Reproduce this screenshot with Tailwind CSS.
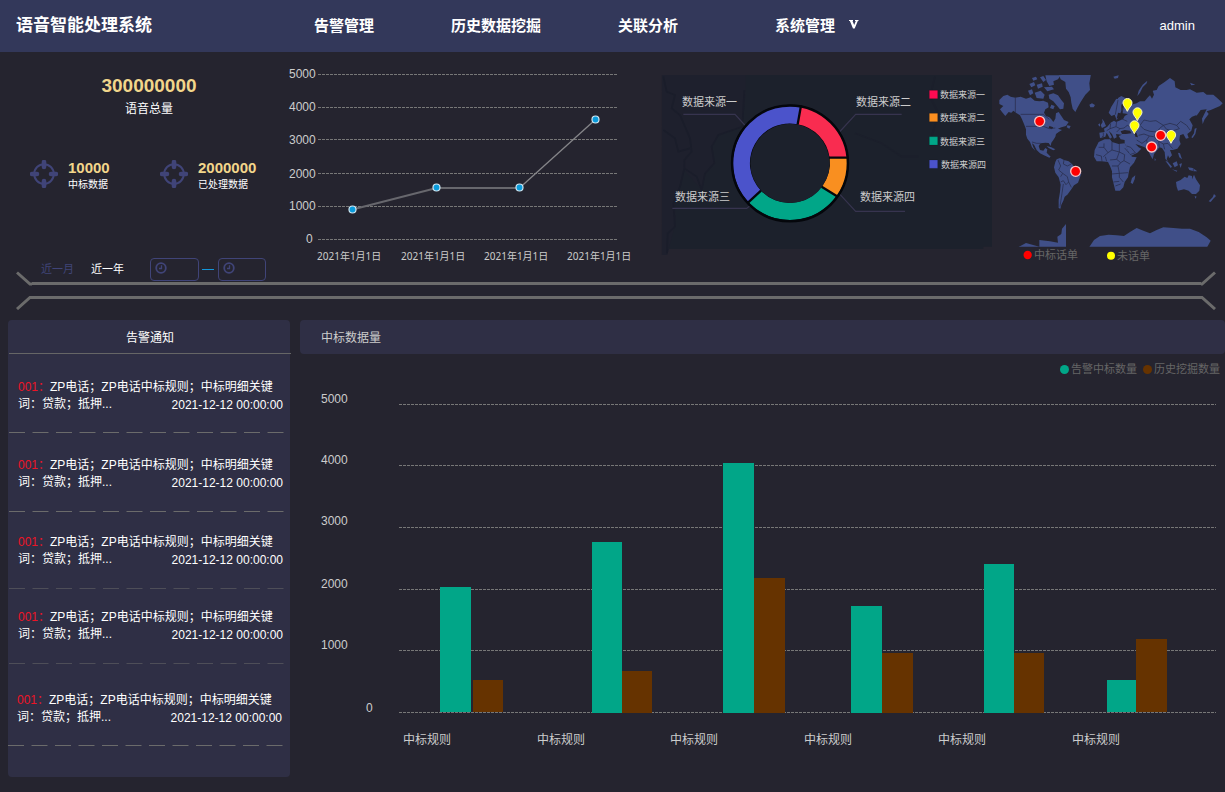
<!DOCTYPE html>
<html lang="zh-CN">
<head>
<meta charset="utf-8">
<meta name="viewport" content="width=device-width, initial-scale=1">
<title>语音智能处理系统</title>
<script src="https://cdn.jsdelivr.net/npm/@tailwindcss/browser@4"></script>
</head>
<body class="min-h-screen bg-[#25242f] font-['Liberation_Sans','Noto_Sans_CJK_SC',sans-serif] text-xs text-white">
<svg class="hidden" aria-hidden="true">
  <symbol id="target" viewBox="0 0 28 28">
    <circle cx="14" cy="14" r="9.800" fill="none" stroke="#404478" stroke-width="2"/>
    <path d="M14 2v5M14 21v5M2 14h5M21 14h5" stroke="#404478" stroke-width="4.600" stroke-linecap="round"/>
  </symbol>
  <symbol id="clock" viewBox="0 0 12 12">
    <circle cx="6" cy="6" r="4.800" fill="none" stroke="#404478" stroke-width="1.800"/>
    <path d="M6.500 3.300v3.200H4" fill="none" stroke="#404478" stroke-width="1.300"/>
  </symbol>
</svg>

<header class="flex h-13 items-center bg-[#33385a]">
  <h1 class="w-[298px] shrink-0 pb-px pl-4 text-[17px] leading-6 font-bold">语音智能处理系统</h1>
  <nav class="flex items-center gap-[77px] pl-4 text-[15px] leading-6 font-semibold whitespace-nowrap">
    <a href="#">告警管理</a>
    <a href="#">历史数据挖掘</a>
    <a href="#">关联分析</a>
    <button class="ml-5 flex gap-3.5 font-semibold"><span>系统管理</span>
      <svg class="mt-1.5 h-2.5 w-2.5" viewBox="0 0 10 10" aria-hidden="true"><path d="M0 0H4V1H3.500L5.200 5 6.800 1H6V0H9.500V1H8.800L5.700 8.500H4L.900 1H0Z" fill="#fff"/></svg>
    </button>
  </nav>
  <a href="#" class="ml-auto pr-[30px] text-[13px]">admin</a>
</header>

<main>
  <section class="grid grid-cols-[280fr_375fr_340fr_230fr]">
    <div class="flex min-w-0 flex-col pt-[22px]">
      <div class="pl-[18px] text-center">
        <p class="text-[19px] leading-6 font-bold text-[#f2d68b]">300000000</p>
        <p class="leading-[22px]">语音总量</p>
      </div>
      <div class="mt-9 grid grid-cols-[130px_1fr] pl-[30px]">
        <div class="flex items-center gap-2.5">
          <svg class="h-7 w-7 shrink-0"><use href="#target"/></svg>
          <div class="pt-0.5"><p class="text-[15px] leading-5 font-bold text-[#f2d68b]">10000</p><p class="text-[10px] leading-[14px]">中标数据</p></div>
        </div>
        <div class="flex items-center gap-2.5">
          <svg class="h-7 w-7 shrink-0"><use href="#target"/></svg>
          <div class="pt-0.5"><p class="text-[15px] leading-5 font-bold text-[#f2d68b]">2000000</p><p class="text-[10px] leading-[14px]">已处理数据</p></div>
        </div>
      </div>
      <form class="mt-[65px] flex h-6 items-center pl-[41px] text-[11px] whitespace-nowrap">
        <button type="button" class="w-[50px] shrink-0 text-left text-[#404478]">近一月</button>
        <button type="button" class="w-[59px] shrink-0 text-left">近一年</button>
        <label class="relative block">
          <svg class="absolute top-1 left-[5px] h-3 w-3"><use href="#clock"/></svg>
          <input type="text" aria-label="开始日期" class="block h-[23px] w-[49px] rounded border border-[#404478] bg-transparent pl-5 text-[10px] outline-none">
        </label>
        <span class="mx-[3px] h-px w-3 bg-[#1296db]"></span>
        <label class="relative ml-px block">
          <svg class="absolute top-1 left-[5px] h-3 w-3"><use href="#clock"/></svg>
          <input type="text" aria-label="结束日期" class="block h-[23px] w-[48px] rounded border border-[#404478] bg-transparent pl-5 text-[10px] outline-none">
        </label>
      </form>
    </div>

    <svg class="w-full" viewBox="280 52 375 220" role="img" aria-label="语音数据趋势">
      <g stroke="#777777" stroke-dasharray="3 1">
        <path d="M318 74.500H617M318 107.500H617M318 139.500H617M318 173.500H617M318 206.500H617M318 239.500H617"/>
      </g>
      <g fill="none" stroke="#67676d">
        <path d="M352.500 209.500 436.500 188H519.500" stroke-width="2"/>
        <path d="M519.500 188 595.500 119.500" stroke-width="1.300" stroke="#858589"/>
      </g>
      <g fill="#0a9bdc" stroke="#cfe8f4" stroke-width="1.200">
        <circle cx="352.500" cy="209.500" r="3.500"/><circle cx="436.500" cy="187.500" r="3.500"/>
        <circle cx="519.500" cy="187.500" r="3.500"/><circle cx="595.500" cy="119.500" r="3.500"/>
      </g>
      <g class="fill-[#cccccc] text-xs">
        <text x="289" y="78">5000</text><text x="289" y="111">4000</text><text x="289" y="144">3000</text>
        <text x="289" y="178">2000</text><text x="289" y="210">1000</text><text x="306" y="243">0</text>
      </g>
      <g class="fill-[#cccccc] font-['Noto_Sans','Noto_Sans_CJK_SC',sans-serif] text-[10px]">
        <text x="317" y="260">2021年1月1日</text><text x="401" y="260">2021年1月1日</text>
        <text x="484" y="260">2021年1月1日</text><text x="567" y="260">2021年1月1日</text>
      </g>
    </svg>

    <svg class="w-full" viewBox="655 52 340 220" role="img" aria-label="数据来源占比">
      <g transform="translate(655 60) scale(.33333)">
        <path d="M21 45H1011V560H985V567H42L36 585H21Z" fill="#1c212c"/>
        <path d="M21 45H272V95L262 200 230 210 190 225 170 260 178 310 150 340 140 390 88 330 60 420 62 490 36 585H21Z" fill="#1e202d"/>
        <path d="M25 50 35 95 60 105 50 145 75 165 90 200 105 235 110 275 88 300V325L125 350 140 390 150 340 178 310 170 260 190 225 262 200 268 90M25 210 60 235 70 275 105 265M88 325 75 380 55 430 60 500 38 520 36 580" fill="none" stroke="#1a1d2a" stroke-width="5"/>
        <path d="M840 50 825 110 850 160 830 230M600 220 680 250 740 290 790 290" fill="none" stroke="#1b1f2b" stroke-width="5"/>
        <path d="M85 163H240L280 207M740 163H602L545 225M52 445H275L300 425M750 454H602L550 398" fill="none" stroke="#37344f" stroke-width="3.500"/>
        <circle cx="405" cy="310" r="146" fill="none" stroke="#05070c" stroke-width="63"/>
        <path d="M437 139A173 173 0 0 1 577 293H524A119 119 0 0 0 428 193Z" fill="#f92c50"/>
        <path d="M577 293A173 173 0 0 1 545 408L500 380A119 119 0 0 0 524 293Z" fill="#f98f20"/>
        <path d="M545 408A173 173 0 0 1 280 427L318 392A119 119 0 0 0 500 380Z" fill="#01a688"/>
        <path d="M280 427A173 173 0 0 1 437 139L428 193A119 119 0 0 0 318 392Z" fill="#4b53cb"/>
        <circle cx="405" cy="310" r="119" fill="#1c212c"/>
        <circle cx="405" cy="310" r="173" fill="none" stroke="#05070c" stroke-width="6"/>
        <path d="M438 137 428 193M578 293H522M546 409 500 380M279 428 318 392" stroke="#05070c" stroke-width="7"/>
        <g stroke="#0003" stroke-width="2">
          <path d="M823 91h25v25h-25z" fill="#ff0b52"/><path d="M823 160h25v25h-25z" fill="#fb8f20"/>
          <path d="M823 230h25v25h-25z" fill="#01a688"/><path d="M823 300h25v25h-25z" fill="#4b53cb"/>
        </g>
      </g>
      <g class="fill-[#cccccc] text-[11px]">
        <text x="682" y="106">数据来源一</text><text x="856" y="106">数据来源二</text>
        <text x="675" y="201">数据来源三</text><text x="860" y="201">数据来源四</text>
      </g>
      <g class="fill-[#cccccc] text-[9px]">
        <text x="940" y="98">数据来源一</text><text x="940" y="121">数据来源二</text>
        <text x="940" y="145">数据来源三</text><text x="941" y="168">数据来源四</text>
      </g>
    </svg>

    <svg class="w-full" viewBox="995 52 230 220" role="img" aria-label="话单分布地图">
      <defs>
        <filter id="coast" x="-5%" y="-5%" width="110%" height="110%">
          <feTurbulence type="fractalNoise" baseFrequency=".22" numOctaves="2" seed="4"/>
          <feDisplacementMap in="SourceGraphic" scale="4" xChannelSelector="R" yChannelSelector="G"/>
        </filter>
        <clipPath id="mapArea"><path d="M0 45H702V560H0Z"/></clipPath>
      </defs>
      <g transform="translate(990 60) scale(.33333)">
        <g clip-path="url(#mapArea)"><g filter="url(#coast)">
          <g fill="#3f5088">
            <path d="M28 120 40 108 52 104 62 110 76 113 92 110 108 116 122 112 134 122 148 124 160 122 174 128 176 142 166 148 162 158 168 168 178 172 184 178 190 186 196 176 198 160 206 156 214 168 222 180 236 186 228 198 214 202 204 206 216 210 206 216 198 222 196 230 190 240 184 248 182 258 176 249 166 248 152 250 146 258 150 270 160 272 166 264 172 268 170 278 182 290 178 293 162 286 150 280 140 270 132 254 126 250 130 262 136 272 126 262 120 246 112 236 108 224 108 208 102 192 96 178 90 166 78 158 70 152 64 158 56 156 46 168 36 156 30 148 40 138 28 132Z"/>
            <path d="M114 92 126 88 130 100 120 106ZM134 98 152 92 164 104 160 116 140 114ZM118 72 132 66 136 76 124 82ZM140 74 156 70 158 80 144 86ZM126 54 138 50 142 58 130 62ZM150 52 160 48 168 60 160 66ZM166 46 212 46 204 58 190 64 192 74 178 78 170 64ZM162 82 186 80 192 88 172 94ZM176 104 190 100 204 106 214 120 222 130 220 146 210 148 200 136 190 124 178 116ZM184 134 194 138 190 148 180 144Z"/>
            <path d="M206 42H303L298 70 300 90 286 104 272 126 264 140 256 156 248 146 244 128 242 112 236 96 228 86 226 66 212 58Z"/>
            <path d="M298 134 306 130 315 135 311 142 301 142ZM170 258 184 262 196 268 190 271 176 264ZM232 196 242 198 238 206 230 202Z"/>
            <path d="M200 298 210 294 222 300 236 304 246 312 252 320 266 330 274 340 270 352 264 368 252 376 244 388 238 396 232 404 224 410 220 422 214 434 211 446 206 444 206 420 210 396 212 374 206 352 196 338 192 322 196 306Z"/>
            <path d="M326 246 344 238 360 238 366 246 386 252 404 250 410 262 418 280 426 290 440 292 432 308 420 322 416 338 414 352 404 366 400 382 390 392 376 392 372 376 366 352 366 334 360 318 354 306 336 304 320 304 312 290 314 270Z"/>
            <path d="M426 354 436 346 434 358 428 372 422 368ZM332 196 338 186 336 176 342 184 348 198 336 204ZM324 194 330 190 330 200Z"/>
            <path d="M356 158 364 140 378 118 394 108 406 114 404 128 394 134 394 152 388 168 380 180 374 164 364 168Z"/>
            <path d="M330 234 328 218 344 216 342 206 352 200 362 188 372 182 378 186 388 182 400 176 404 168 414 162 398 160 398 144 404 130 406 116 426 124 424 134 440 130 450 124 464 124 474 112 480 106 486 116 492 104 488 92 500 90 506 78 524 66 540 54 554 64 556 82 572 90 590 90 600 88 620 98 640 96 650 104 670 104 684 116 698 130 690 138 676 144 662 150 650 154 656 162 644 178 638 192 636 176 644 160 650 148 632 150 622 164 606 170 598 178 608 196 604 212 592 222 596 234 588 236 580 222 570 226 568 240 572 252 562 266 548 270 540 270 546 286 538 294 534 286 530 298 536 308 526 296 524 276 516 264 508 262 500 272 492 282 488 298 480 284 474 270 464 262 448 256 436 252 446 262 454 266 442 278 422 288 414 272 404 250 404 240 392 238 386 228 396 224 378 222 380 232 372 236 366 222 356 212 366 232 360 236 350 218 346 230Z"/>
            <path d="M442 108 446 92 458 74 472 62 470 70 458 82 450 98ZM370 50 386 46 384 54 374 56ZM600 68 616 74 604 76Z"/>
            <path d="M558 366 572 360 584 350 592 354 596 346 606 348 606 358 612 344 618 358 630 376 628 392 618 402 606 402 596 392 582 388 564 392 560 380ZM614 408 620 410 616 416Z"/>
            <path d="M526 302 534 306 546 320 542 324ZM548 310 560 304 564 316 554 322ZM568 312 576 310 572 324ZM546 328 562 332 560 335ZM594 322 608 324 622 334 612 334 598 330ZM564 278 570 280 576 298 568 292ZM604 232 612 220 614 206 620 204 616 222 608 234ZM672 402 678 408 670 416 662 426 656 424 668 412ZM494 294 498 300 494 302Z"/>
            <path d="M296 564 312 540 330 528 356 524 380 526 402 528 420 516 440 504 460 512 480 520 500 510 520 502 550 504 576 506 600 506 626 516 650 532 662 542 650 564ZM80 564 108 549 140 558 148 560 148 540 180 544 204 548 202 530 214 522 216 506 228 492 228 564Z"/>
          </g>
          <g fill="#25242f"><path d="M392 214 404 210 420 212 424 220 408 222 396 222ZM430 206 440 204 438 216 444 232 436 230ZM384 158 392 160 388 172 380 176ZM178 198 190 202 186 208 176 204Z"/></g>
          <path d="M76 113V158M92 163H160L178 178M108 199H160L178 206 196 204M126 246 140 250 152 250M204 300 212 318 206 330 218 340 212 350M222 300 220 312 232 318 244 312M218 340 232 350 236 366 228 374 220 362 212 366M236 366 244 382M220 372 216 400 210 440M326 262 342 262V250M342 262 354 278 340 290M366 246V270L354 278M388 252V276L404 284M366 270 388 276 380 298 360 300M318 284 334 288 336 304M346 290 350 304M404 264 418 280M404 284 402 302 420 312M380 298 392 308 402 302M366 318 384 318 392 308M384 318 388 340 414 338M366 342 388 340V352L400 366M370 366 388 364M376 378 392 372M410 258 422 262 436 278 420 284M380 184 378 200 390 206 380 216M362 190 360 206 350 212M360 206 378 200M390 206 402 204 412 196 420 200M394 176 412 184M404 130 396 158M384 120 376 164M450 196 462 180 480 184 498 182 520 196 508 206 500 216 480 214 462 208ZM520 196 540 190 560 196 568 206 550 212 530 208ZM560 196 572 184 590 196 600 210M500 216 492 230 506 244 520 252 534 250M446 226 462 222 478 228 490 230M440 240 456 250 470 240 478 228M470 240 474 264M506 244 508 262M520 252 524 268M534 250 548 266M610 326V334M340 218 340 232" fill="none" stroke="#282b49" stroke-width="2.200"/>
        </g></g>
        <g fill="#ff0000" stroke="#f6c6c6" stroke-width="4">
          <circle cx="149" cy="184" r="15"/><circle cx="257" cy="334" r="15"/><circle cx="512" cy="226" r="15"/><circle cx="485" cy="261" r="15"/>
        </g>
        <g fill="#ffff00" stroke="#f7f5c8" stroke-width="3">
          <path id="pin" d="M412 154C408 143 399 138 399 129A13.500 13.500 0 0 1 426 129C426 138 416 143 412 154Z"/>
          <use href="#pin" x="30" y="28"/><use href="#pin" x="21" y="67"/><use href="#pin" x="131" y="96"/>
        </g>
        <circle cx="113" cy="585" r="12.500" fill="#ff0000"/><circle cx="363" cy="587" r="12" fill="#ffff00"/>
      </g>
      <g class="fill-[#666666] text-[11px]"><text x="1034" y="259">中标话单</text><text x="1117" y="260">未话单</text></g>
    </svg>
  </section>

  <div class="-mt-[10px] flex h-[39px]" aria-hidden="true">
    <svg class="w-8 shrink-0" viewBox="0 0 32 39"><path d="M17 1.500 30 13H32M17 38 30 26.500H32" fill="none" stroke="#6b6b6b" stroke-width="3"/></svg>
    <div class="flex flex-1 flex-col justify-center gap-[11px]"><span class="h-[3px] bg-[#6b6b6b]"></span><span class="h-[3px] bg-[#6b6b6b]"></span></div>
    <svg class="w-6 shrink-0" viewBox="0 0 24 39"><path d="M0 13H1L14 1.500M0 26.500H1L14 38" fill="none" stroke="#6b6b6b" stroke-width="3"/></svg>
  </div>

  <div class="mt-2.5 grid grid-cols-[282px_1fr] items-start gap-2.5 pl-2">
    <section class="rounded bg-[#2f2f45] pb-[31px]">
      <h2 class="-mr-px ml-px border-b border-[#666666] pt-2 pb-1 text-center leading-[21px]">告警通知</h2>
      <ul class="leading-[17px]">
        <li class="pt-[25px]">
          <div class="relative pr-1 pl-2.5"><p><span class="text-[#ee1426]">001：</span>ZP电话；ZP电话中标规则；中标明细关键<br>词：贷款；抵押...</p><time class="absolute right-[7px] -bottom-px">2021-12-12 00:00:00</time></div>
          <svg class="mt-[19px] block h-px w-full"><path d="M1 .5H276" stroke="#6b6b6b" stroke-dasharray="16 7.500"/></svg>
        </li>
        <li class="pt-6">
          <div class="relative pr-1 pl-2.5"><p><span class="text-[#ee1426]">001：</span>ZP电话；ZP电话中标规则；中标明细关键<br>词：贷款；抵押...</p><time class="absolute right-[7px] -bottom-px">2021-12-12 00:00:00</time></div>
          <svg class="mt-5 block h-px w-full"><path d="M1 .5H276" stroke="#6b6b6b" stroke-dasharray="16 7.500"/></svg>
        </li>
        <li class="pt-[22px]">
          <div class="relative pr-1 pl-2.5"><p><span class="text-[#ee1426]">001：</span>ZP电话；ZP电话中标规则；中标明细关键<br>词：贷款；抵押...</p><time class="absolute right-[7px] -bottom-px">2021-12-12 00:00:00</time></div>
          <svg class="mt-5 block h-px w-full"><path d="M1 .5H276" stroke="#4e4e58" stroke-dasharray="16 7.500"/></svg>
        </li>
        <li class="pt-5">
          <div class="relative pr-1 pl-2.5"><p><span class="text-[#ee1426]">001：</span>ZP电话；ZP电话中标规则；中标明细关键<br>词：贷款；抵押...</p><time class="absolute right-[7px] -bottom-px">2021-12-12 00:00:00</time></div>
          <svg class="mt-5 block h-px w-full"><path d="M1 .5H276" stroke="#4e4e58" stroke-dasharray="16 7.500"/></svg>
        </li>
        <li class="pt-7">
          <div class="relative pr-1 pl-[9px]"><p><span class="text-[#ee1426]">001：</span>ZP电话；ZP电话中标规则；中标明细关键<br>词：贷款；抵押...</p><time class="absolute right-2 -bottom-px">2021-12-12 00:00:00</time></div>
          <svg class="mt-[19px] block h-px w-full"><path d="M0 .5H275" stroke="#6b6b6b" stroke-dasharray="16 7.500"/></svg>
        </li>
      </ul>
    </section>

    <section class="min-w-0">
      <h2 class="rounded bg-[#2f2f45] pt-2 pb-1.5 pl-[21px] leading-5 text-[#cccccc]">中标数据量</h2>
      <div class="flex h-[30px] items-center justify-end gap-1.5 pr-[5px] text-[11px] text-[#666666]">
        <span class="flex items-center gap-0.5"><i class="h-[9px] w-[9px] rounded-full bg-[#01a688]"></i>告警中标数量</span>
        <span class="flex items-center gap-0.5"><i class="h-[9px] w-[9px] rounded-full bg-[#663300]"></i>历史挖掘数量</span>
      </div>
      <svg class="w-full" viewBox="300 384 925 370" role="img" aria-label="中标数据量柱状图">
        <path d="M399 404.500H1216M399 465.500H1216M399 527.500H1216M399 589.500H1216M399 650.500H1216M399 712.500H1216" stroke="#777777" stroke-dasharray="3 1"/>
        <path d="M440 587h31v125h-31zM592 542h30v171h-30zM723 463h31v250h-31zM851 606h31v107h-31zM984 564h30v149h-30zM1107 680h29v32h-29z" fill="#01a688"/>
        <path d="M473 680h30v32h-30zM622 671h30v42h-30zM754 578h31v135h-31zM882 653h31v60h-31zM1014 653h30v60h-30zM1136 639h31v73h-31z" fill="#663300"/>
        <g class="fill-[#cccccc] text-xs">
          <text x="321" y="403">5000</text><text x="321" y="464">4000</text><text x="321" y="525">3000</text>
          <text x="321" y="588">2000</text><text x="321" y="649">1000</text><text x="366" y="712">0</text>
          <text x="403" y="744">中标规则</text><text x="537" y="744">中标规则</text><text x="670" y="744">中标规则</text>
          <text x="804" y="744">中标规则</text><text x="938" y="744">中标规则</text><text x="1072" y="744">中标规则</text>
        </g>
      </svg>
    </section>
  </div>
</main>
</body>
</html>
